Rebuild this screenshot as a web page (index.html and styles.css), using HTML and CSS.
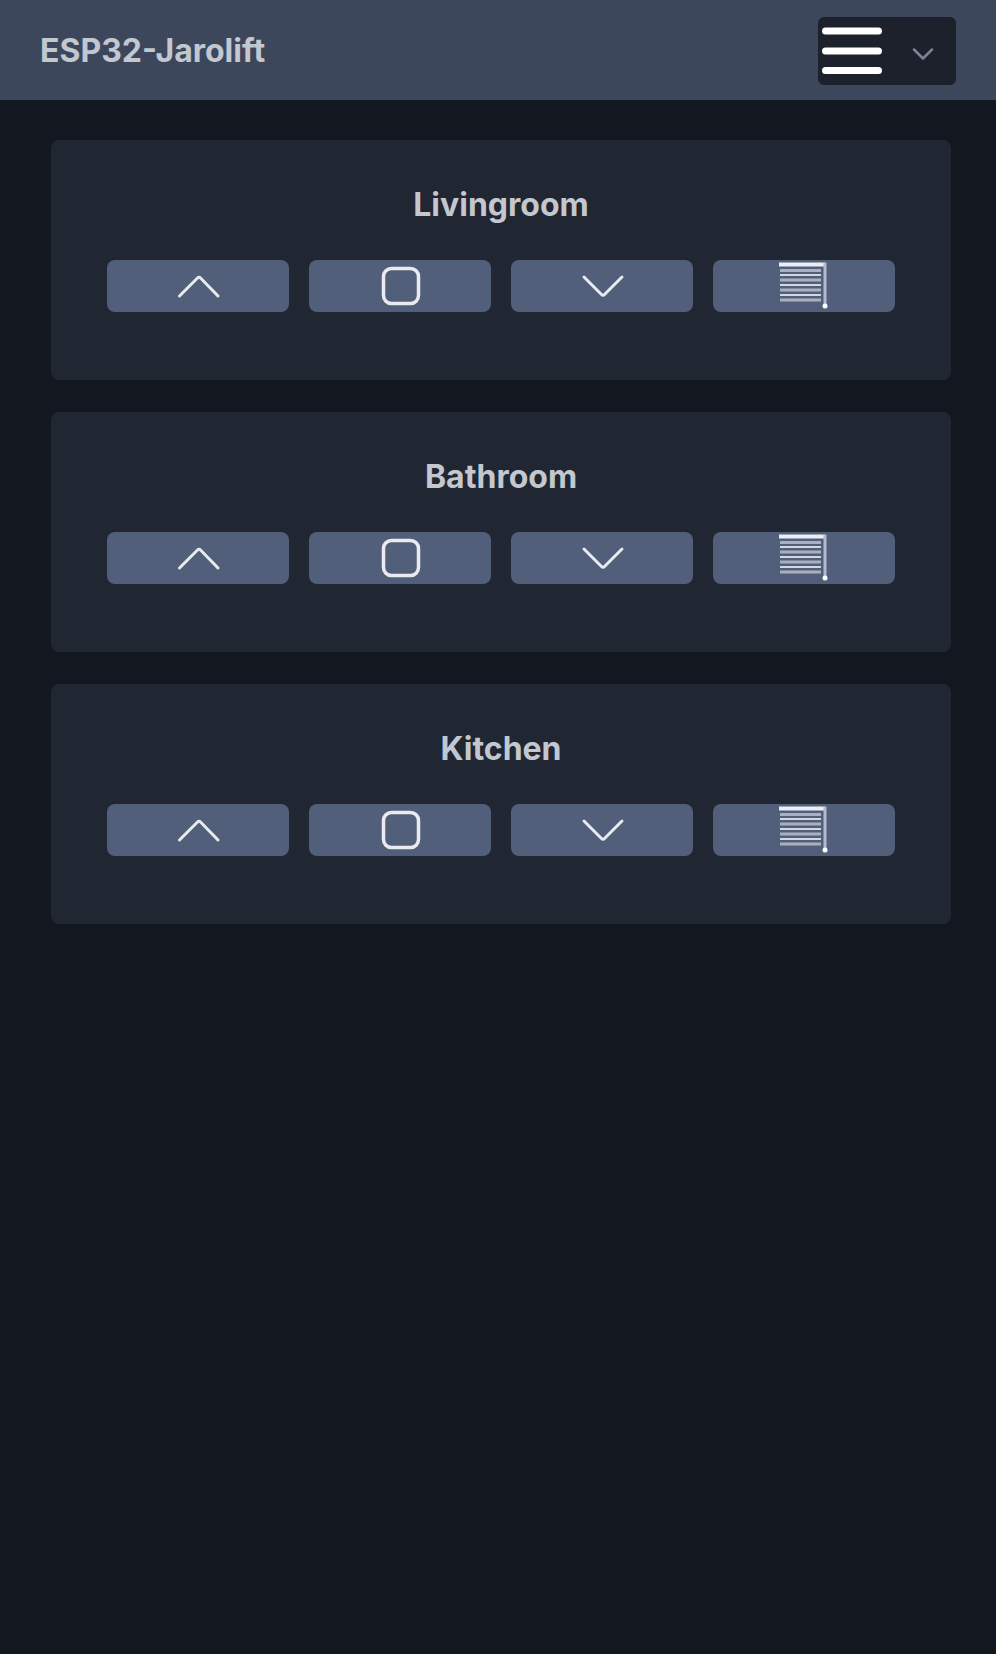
FILE: index.html
```html
<!DOCTYPE html>
<html lang="en">
<head>
<meta charset="utf-8">
<meta name="viewport" content="width=device-width, initial-scale=1">
<title>ESP32-Jarolift</title>
<link rel="stylesheet" href="styles.css">
</head>
<body>
<svg class="sprite" aria-hidden="true">
  <symbol id="icon-up" viewBox="0 0 48 48"><path d="M5.500 34 23.500 16Q25 14.500 26.500 16L44 34" fill="none" stroke="currentColor" stroke-width="3" stroke-linecap="round"/></symbol>
  <symbol id="icon-stop" viewBox="0 0 48 48"><rect x="7.500" y="6.500" width="35" height="35" rx="8" fill="none" stroke="currentColor" stroke-width="3.500"/></symbol>
  <symbol id="icon-down" viewBox="0 0 48 48"><path d="M6 15 23.500 32.500Q25 34 26.500 32.500L44 15" fill="none" stroke="currentColor" stroke-width="3" stroke-linecap="round"/></symbol>
  <symbol id="icon-shade" viewBox="0 0 48 48">
    <path d="M-1 2.500H46" fill="none" stroke="#eceef3" stroke-width="4"/>
    <path d="M45 1V43" fill="none" stroke="#b2b9c9" stroke-width="3"/>
    <path d="M0 8.500H41M0 18H41M0 28H41M0 38H41" fill="none" stroke="#a9b0c2" stroke-width="3"/>
    <path d="M0 13H41M0 23H41M0 33H41" fill="none" stroke="#d3d7e0" stroke-width="2"/>
    <circle cx="45" cy="44" r="2.500" fill="#fff"/>
  </symbol>
</svg>

<header class="topbar">
  <h1 class="brand">ESP32-Jarolift</h1>
  <button class="menu" type="button" aria-label="Menu" aria-haspopup="true">
    <svg class="menu-bars" viewBox="0 0 60 60" aria-hidden="true"><path d="M3.500 10H56.500M3.500 30H56.500M3.500 49.500H56.500" stroke="#fff" stroke-width="7" stroke-linecap="round"/></svg>
    <svg class="menu-arrow" viewBox="0 0 24 24" aria-hidden="true"><path d="M3 10.500 12 19.500 21 10.500" fill="none" stroke="currentColor" stroke-width="2.500" stroke-linecap="round" stroke-linejoin="round"/></svg>
  </button>
</header>

<main class="rooms">
  <section class="card" aria-labelledby="room-1">
    <h2 class="card-title" id="room-1">Livingroom</h2>
    <div class="controls">
      <button class="control" type="button" aria-label="Up"><svg class="icon"><use href="#icon-up"/></svg></button>
      <button class="control" type="button" aria-label="Stop"><svg class="icon"><use href="#icon-stop"/></svg></button>
      <button class="control" type="button" aria-label="Down"><svg class="icon"><use href="#icon-down"/></svg></button>
      <button class="control" type="button" aria-label="Shade"><svg class="icon"><use href="#icon-shade"/></svg></button>
    </div>
  </section>
  <section class="card" aria-labelledby="room-2">
    <h2 class="card-title" id="room-2">Bathroom</h2>
    <div class="controls">
      <button class="control" type="button" aria-label="Up"><svg class="icon"><use href="#icon-up"/></svg></button>
      <button class="control" type="button" aria-label="Stop"><svg class="icon"><use href="#icon-stop"/></svg></button>
      <button class="control" type="button" aria-label="Down"><svg class="icon"><use href="#icon-down"/></svg></button>
      <button class="control" type="button" aria-label="Shade"><svg class="icon"><use href="#icon-shade"/></svg></button>
    </div>
  </section>
  <section class="card" aria-labelledby="room-3">
    <h2 class="card-title" id="room-3">Kitchen</h2>
    <div class="controls">
      <button class="control" type="button" aria-label="Up"><svg class="icon"><use href="#icon-up"/></svg></button>
      <button class="control" type="button" aria-label="Stop"><svg class="icon"><use href="#icon-stop"/></svg></button>
      <button class="control" type="button" aria-label="Down"><svg class="icon"><use href="#icon-down"/></svg></button>
      <button class="control" type="button" aria-label="Shade"><svg class="icon"><use href="#icon-shade"/></svg></button>
    </div>
  </section>
</main>
</body>
</html>
```
FILE: styles.css
```css
* {
  box-sizing: border-box;
}

body {
  margin: 0;
  min-height: 100vh;
  background: #13171f;
  color: #c2c7d0;
  font-family: Inter, "Liberation Sans", sans-serif;
}

.sprite {
  display: none;
}

.topbar {
  display: flex;
  align-items: center;
  justify-content: space-between;
  padding: 17px 40px 15px;
  background: #3d475c;
}

.brand,
.card-title {
  margin: 0;
  font-size: 32px;
  font-weight: 700;
  line-height: 48px;
}

.brand {
  color: #c2c7d0;
}

.menu {
  display: flex;
  align-items: center;
  gap: 29px;
  padding: 4px 21px 4px 4px;
  border: 0;
  border-radius: 6px;
  background: #1c212c;
  color: #7b8495;
}

.menu-bars {
  width: 60px;
  height: 60px;
}

.menu-arrow {
  width: 24px;
  height: 24px;
}

.rooms {
  display: grid;
  gap: 32px;
  padding: 40px 45px 40px 51px;
}

.card {
  padding: 41px 56px 68px;
  border-radius: 8px;
  background: #202632;
}

.card-title {
  margin-bottom: 31px;
  text-align: center;
}

.controls {
  display: grid;
  grid-template-columns: repeat(4, 1fr);
  gap: 20px;
}

.control {
  display: flex;
  align-items: center;
  justify-content: center;
  height: 52px;
  padding: 0;
  border: 0;
  border-radius: 8px;
  background: #525f7a;
  color: #e9ebf0;
}

.icon {
  width: 48px;
  height: 48px;
  overflow: visible;
}

.icon use,
symbol {
  overflow: visible;
}
```
